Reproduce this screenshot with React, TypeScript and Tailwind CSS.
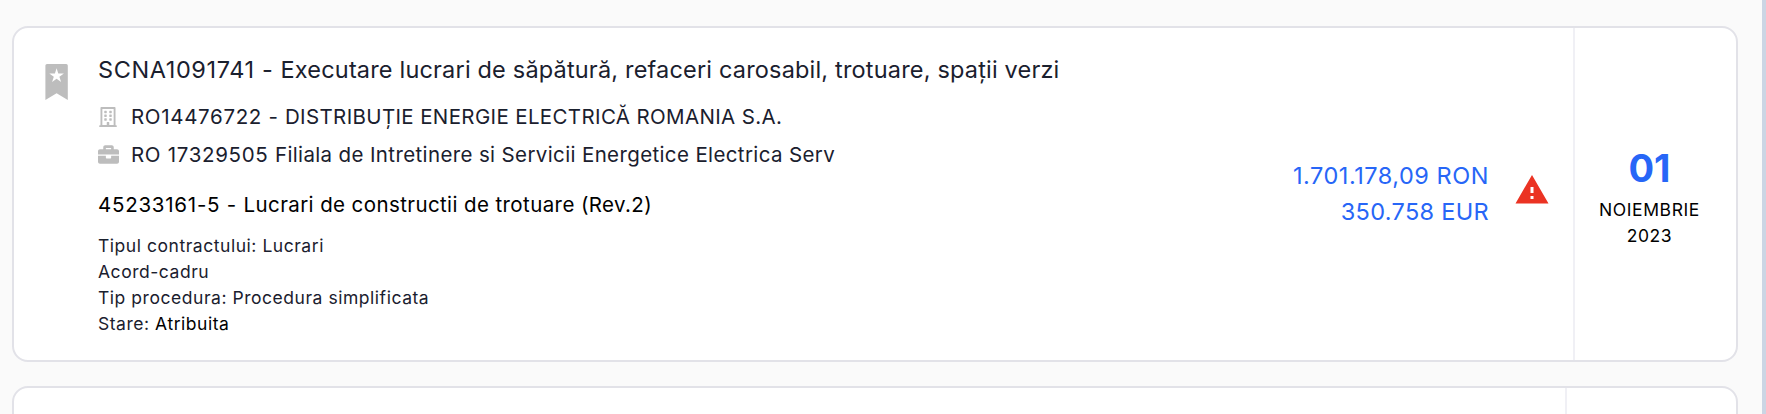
import React from 'react';
import { FaBriefcase, FaRegBuilding } from 'react-icons/fa';
import { MdWarning } from 'react-icons/md';

const notice = {
  id: 'SCNA1091741 - ',
  title: 'Executare lucrari de săpătură, refaceri carosabil, trotuare, spații verzi',
  authorityId: 'RO14476722 - ',
  authority: 'DISTRIBUȚIE ENERGIE ELECTRICĂ ROMANIA S.A.',
  supplierId: 'RO 17329505 ',
  supplier: 'Filiala de Intretinere si Servicii Energetice Electrica Serv',
  cpvId: '45233161-5 - ',
  cpv: 'Lucrari de constructii de trotuare (Rev.2)',
  details: ['Tipul contractului: Lucrari', 'Acord-cadru', 'Tip procedura: Procedura simplificata'],
  state: 'Atribuita',
  ron: '1.701.178,09 RON',
  eur: '350.758 EUR',
  day: '01',
  month: 'NOIEMBRIE',
  year: '2023',
};

function BookmarkStar() {
  return (
    <svg width="24" height="36" viewBox="0 0 24 36" fill="#bdbdbd">
      <path
        fillRule="evenodd"
        d="M2 0h19.2a1.6 1.6 0 0 1 1.6 1.6V36L11.6 29.2.4 36V1.6A1.6 1.6 0 0 1 2 0zM11.6 4.2 9.9 9.4H4.3l4.5 3.3-1.7 5.4 4.5-3.3 4.5 3.3-1.7-5.4 4.5-3.3h-5.6z"
      />
    </svg>
  );
}

export default function App() {
  return (
    <div className="flex h-[414px] justify-between overflow-hidden bg-[#fafafa] font-['Inter',sans-serif] text-[#1a202e]">
      <div className="flex w-[1738px] flex-col gap-6 pt-[26px] pl-3">
        <div className="flex h-[336px] shrink-0 rounded-2xl border-2 border-[#e2e2e8] bg-white">
          <div className="w-[84px] shrink-0 pt-9 pl-[30.5px]">
            <BookmarkStar />
          </div>

          <div className="flex min-w-0 flex-1 flex-col whitespace-nowrap">
            <h2 className="mt-[25px] text-[23.5px] leading-[34px] tracking-[0.18px]">
              <span className="tracking-[0.6px]">{notice.id}</span>
              {notice.title}
            </h2>
            <div className="mt-[11px] flex h-[38px] items-center">
              <div className="w-[33px] shrink-0 pb-px">
                <FaRegBuilding size={20} color="#bdbdbd" />
              </div>
              <p className="text-[20.5px] leading-[38px] tracking-[0.36px]">
                <span className="tracking-[0.67px]">{notice.authorityId}</span>
                {notice.authority}
              </p>
            </div>
            <div className="flex h-[38px] items-center">
              <div className="w-[33px] shrink-0 pb-px">
                <FaBriefcase size={21} color="#bdbdbd" />
              </div>
              <p className="text-[20.5px] leading-[38px] tracking-[0.37px]">
                <span className="tracking-[0.68px]">{notice.supplierId}</span>
                {notice.supplier}
              </p>
            </div>
            <p className="mt-[14px] text-[20.5px] leading-[34px] tracking-[0.4px] text-black">
              <span className="tracking-[0.75px]">{notice.cpvId}</span>
              {notice.cpv}
            </p>
            <div className="mt-[11px] text-[17.5px] leading-[26px] tracking-[0.54px]">
              {notice.details.map((line) => (
                <p key={line}>{line}</p>
              ))}
              <p>
                Stare: <span className="text-black">{notice.state}</span>
              </p>
            </div>
          </div>

          <div className="flex shrink-0 items-center">
            <div className="text-right text-[23.5px] leading-9 text-[#2766f7]">
              <p className="tracking-[0.53px]">{notice.ron}</p>
              <p className="tracking-[0.32px]">{notice.eur}</p>
            </div>
            <div className="mt-[-8px] mr-[23px] ml-[25px]">
              <MdWarning size={36} color="#eb3323" />
            </div>
          </div>

          <div className="flex w-[163px] shrink-0 flex-col items-center justify-center border-l-2 border-[#f0f0f5] pt-[5px] pr-[12px] text-black">
            <p className="mb-[5px] text-[38px] leading-[48px] font-bold text-[#2766f7]">{notice.day}</p>
            <p className="text-[17.5px] leading-[26px] tracking-[0.6px]">{notice.month}</p>
            <p className="text-[17.5px] leading-[26px] tracking-[0.6px]">{notice.year}</p>
          </div>
        </div>

        <div className="flex h-[336px] shrink-0 justify-end rounded-2xl border-2 border-[#e2e2e8] bg-white">
          <div className="w-[171px] border-l-2 border-[#f0f0f5]" />
        </div>
      </div>
      <div className="w-1 bg-[#cbd5e4]" />
    </div>
  );
}
